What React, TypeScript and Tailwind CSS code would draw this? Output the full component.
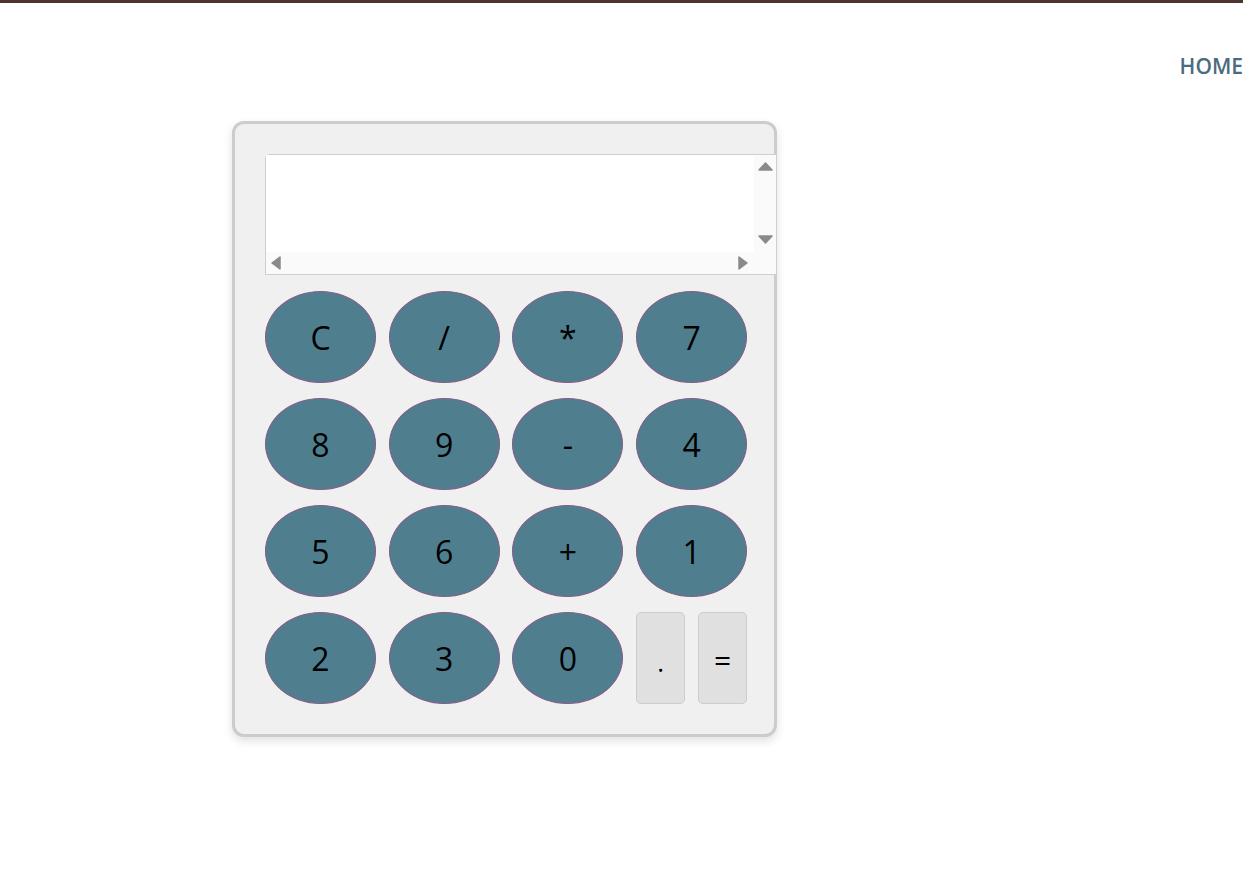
import React from "react";

const keys = ["C", "/", "*", "7", "8", "9", "-", "4", "5", "6", "+", "1", "2", "3", "0"];

function Arrow({ dir }: { dir: "up" | "down" | "left" | "right" }) {
  const pts = {
    up: "1,9 7.5,2 14,9",
    down: "1,1 7.5,8 14,1",
    left: "10,1 10,13 2,7",
    right: "1,1 1,13 9,7",
  }[dir];
  const size = dir === "up" || dir === "down" ? { w: 15, h: 10 } : { w: 11, h: 14 };
  return (
    <svg width={size.w} height={size.h} viewBox={`0 0 ${size.w} ${size.h}`}>
      <polygon points={pts} fill="#8a8a8a" stroke="#8a8a8a" strokeWidth="1.5" strokeLinejoin="round" />
    </svg>
  );
}

function Display() {
  return (
    <div className="grid h-[121px] w-[512px] grid-cols-[1fr_22px] grid-rows-[1fr_22px] rounded-tl-[4px] border border-[#cfcfcf] bg-white">
      <div className="bg-white" />
      <div className="flex flex-col items-center justify-between bg-[#fafafa] pt-[6px] pb-[7px]">
        <Arrow dir="up" />
        <Arrow dir="down" />
      </div>
      <div className="flex items-center justify-between bg-[#fafafa] pl-[4px] pr-[5px]">
        <Arrow dir="left" />
        <Arrow dir="right" />
      </div>
      <div className="bg-[#fafafa]" />
    </div>
  );
}

function App() {
  return (
    <div
      className="min-h-screen border-t-[3px] border-[#4e342e] bg-white"
      style={{ fontFamily: '"Open Sans", "Noto Sans", sans-serif' }}
    >
      <div className="flex justify-end pt-[48px]">
        <a className="text-[21px] font-semibold leading-[30px] text-[#4b6b80]">HOME</a>
      </div>

      <div className="ml-[232px] mt-[40px] w-[545px] rounded-[12px] border-[3px] border-[#cccccc] bg-[#f0f0f0] p-[30px] pr-0 shadow-[0_4px_10px_rgba(0,0,0,0.12)]">
        <Display />
        <div className="mt-[16px] grid grid-cols-[111px_111px_111px_111px] gap-x-[12.7px] gap-y-[15px] pr-[27px]">
          {keys.map((k) => (
            <button
              key={k}
              className="flex h-[92px] w-[111px] items-center justify-center rounded-[50%] border border-[#8a5a88] bg-[#4f7f8f] pt-[2px] text-[32px] leading-none text-black"
            >
              {k}
            </button>
          ))}
          <div className="flex h-[92px] gap-[13px]">
            <button className="flex w-[49px] items-end justify-center rounded-[5px] border border-[#cccccc] bg-[#e0e0e0] pb-[28px] text-[26px] leading-none text-black">
              .
            </button>
            <button className="flex w-[49px] items-center justify-center rounded-[5px] border border-[#cccccc] bg-[#e0e0e0] pt-[4px] text-[30px] leading-none text-black">
              =
            </button>
          </div>
        </div>
      </div>
    </div>
  );
}

export default App;
